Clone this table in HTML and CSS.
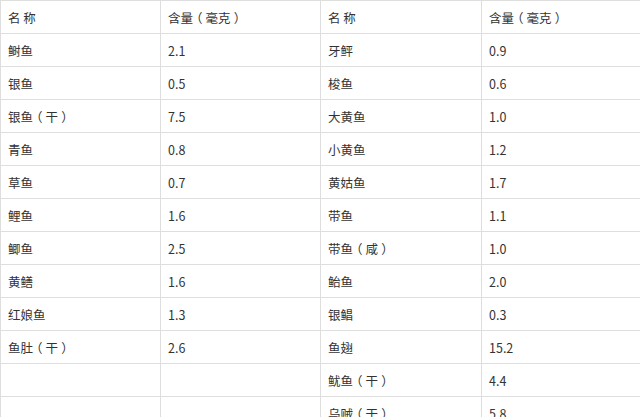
FILE: index.html
```html
<!DOCTYPE html>
<html lang="zh">
<head>
<meta charset="utf-8">
<link rel="stylesheet" href="styles.css">
</head>
<body>
<table class="fish">
  <colgroup>
    <col class="c1"><col class="c2"><col class="c3"><col class="c4">
  </colgroup>
  <tr><td>名 称</td><td>含量<span class="pp">（</span>毫克<span class="pp">）</span></td><td>名 称</td><td>含量<span class="pp">（</span>毫克<span class="pp">）</span></td></tr>
  <tr><td>鲥鱼</td><td>2.1</td><td>牙鲆</td><td>0.9</td></tr>
  <tr><td>银鱼</td><td>0.5</td><td>梭鱼</td><td>0.6</td></tr>
  <tr><td>银鱼<span class="pp">（</span>干<span class="pp">）</span></td><td>7.5</td><td>大黄鱼</td><td>1.0</td></tr>
  <tr><td>青鱼</td><td>0.8</td><td>小黄鱼</td><td>1.2</td></tr>
  <tr><td>草鱼</td><td>0.7</td><td>黄姑鱼</td><td>1.7</td></tr>
  <tr><td>鲤鱼</td><td>1.6</td><td>带鱼</td><td>1.1</td></tr>
  <tr><td>鲫鱼</td><td>2.5</td><td>带鱼<span class="pp">（</span>咸<span class="pp">）</span></td><td>1.0</td></tr>
  <tr><td>黄鳝</td><td>1.6</td><td>鲐鱼</td><td>2.0</td></tr>
  <tr><td>红娘鱼</td><td>1.3</td><td>银鲳</td><td>0.3</td></tr>
  <tr><td>鱼肚<span class="pp">（</span>干<span class="pp">）</span></td><td>2.6</td><td>鱼翅</td><td>15.2</td></tr>
  <tr><td></td><td></td><td>鱿鱼<span class="pp">（</span>干<span class="pp">）</span></td><td>4.4</td></tr>
  <tr><td></td><td></td><td>乌贼<span class="pp">（</span>干<span class="pp">）</span></td><td>5.8</td></tr>
</table>
</body>
</html>
```
FILE: styles.css
```css
html, body {
  margin: 0;
  padding: 0;
  background: #ffffff;
  overflow: hidden;
}
.fish {
  border-collapse: collapse;
  table-layout: fixed;
  width: 800px;
  font-family: "Noto Sans CJK SC", "Noto Sans", sans-serif;
  font-size: 12.5px;
  color: #333333;
}
.c1 { width: 160px; }
.c2 { width: 160px; }
.c3 { width: 161px; }
.c4 { width: 319px; }
.fish td {
  border: 1px solid #dedede;
  height: 32px;
  padding: 0 0 0 7px;
  vertical-align: middle;
  white-space: nowrap;
}
.pp {
  font-feature-settings: "halt" 1;
  padding: 0 0.25em;
}
```
